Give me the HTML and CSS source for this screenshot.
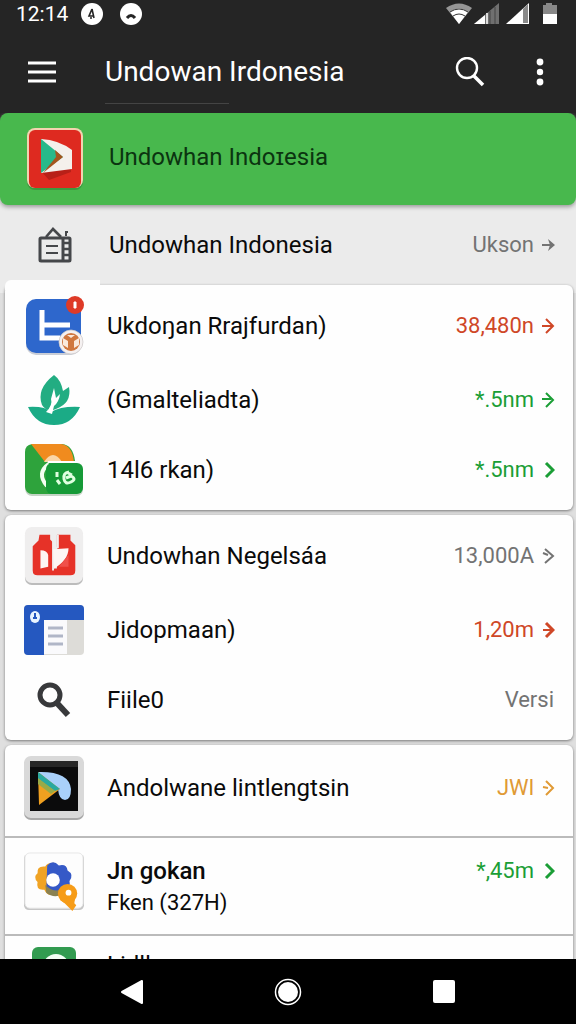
FILE: index.html
```html
<!DOCTYPE html>
<html lang="id">
<head>
<meta charset="utf-8">
<meta name="viewport" content="width=device-width, initial-scale=1">
<title>Undowan Irdonesia</title>
<link rel="stylesheet" href="styles.css">
</head>
<body>
<div class="screen">
  <header class="top">
    <div class="status">
      <span class="clock">12:14</span>
      <svg class="status-dot" viewBox="0 0 22 22" aria-hidden="true"><circle cx="11" cy="11" r="11" fill="#fff"/><path d="M11 6l-3 7h5M11 6l2 9M9 15h2" fill="none" stroke="#252525" stroke-width="1.600"/></svg>
      <svg class="status-dot" viewBox="0 0 22 22" aria-hidden="true"><circle cx="11" cy="11" r="11" fill="#fff"/><path d="M7 15q4-5 8 0" fill="none" stroke="#252525" stroke-width="3"/></svg>
      <svg class="signals" viewBox="0 0 112 22" aria-hidden="true">
        <path d="M0 5Q13-4 26 5L13 21Z" fill="#969696"/><path d="M4 9q9-7 18 0l-9 12Z" fill="#fff"/><path d="M4 9q9-6 18 0M7 13q6-4 12 0" fill="none" stroke="#333" stroke-width="1"/>
        <path d="M28 21L53 0V21Z" fill="#707070"/><path d="M28 21L39 12V21Z" fill="#fff"/><path d="M41 10v11" stroke="#ddd" stroke-width="2"/><path d="M44 8v13M49 4v17" stroke="#444"/>
        <path d="M60 21L83 0V21Z" fill="#fff"/><path d="M77 6L82 1V20H77Z" fill="#8a8a8a"/>
        <path d="M97 2h3V0h6v2h5v19H97Z" fill="#888"/><path d="M97 11h14v10H97Z" fill="#fff"/>
      </svg>
    </div>
    <div class="toolbar">
      <button class="tool" type="button" aria-label="Menu"><svg width="28" height="22" viewBox="0 0 28 22"><path d="M0 2h28M0 11h28M0 20h28" stroke="#fff" stroke-width="3"/></svg></button>
      <h1 class="title">Undowan Irdonesia</h1>
      <button class="tool" type="button" aria-label="Cari"><svg width="30" height="30" viewBox="0 0 30 30" fill="none" stroke="#fff"><circle cx="12" cy="11" r="10" stroke-width="2.4"/><path d="M19 19l9 9" stroke-width="3.6"/></svg></button>
      <button class="tool" type="button" aria-label="Opsi lain"><svg width="8" height="28" viewBox="0 0 8 28" fill="#fff"><circle cx="4" cy="4" r="3.4"/><circle cx="4" cy="14" r="3.2"/><circle cx="4" cy="24" r="3.4"/></svg></button>
    </div>
  </header>

  <main class="content">
    <a class="row banner" href="#">
      <span class="icon"><svg width="58" height="62" viewBox="0 0 58 62">
        <rect x="1" y="2" width="56" height="60" rx="8" fill="#2f7d32" opacity=".5"/><rect x="1" y="0" width="56" height="60" rx="8" fill="#f3d3b0"/><rect x="3" y="2" width="52" height="58" rx="6" fill="#de2a20"/>
        <path d="M15 43l8 9 22-8v-3Z" fill="#b82018"/><path d="M15 11q18 1 31 11v19l-31 4Z" fill="#f4f0ec"/><path d="M15 11L37 29 15 45Z" fill="#27b98a"/><path d="M29 22l8 7-20 16 13-16Z" fill="#a4551e"/></svg></span>
      <span class="label">Undowhan Indoɪesia</span>
    </a>
    <a class="row intro" href="#">
      <span class="icon"><svg width="34" height="36" viewBox="0 0 34 36" fill="none" stroke="#45474a">
        <rect x="2" y="11" width="30" height="23" rx="1" stroke-width="3"/><path d="M8 10l7-8 8 8" stroke-width="2.6"/><path d="M25 11v23" stroke-width="3"/><path d="M26 16h6M26 22h6M26 28h6" stroke-width="2.6"/><path d="M8 19h12M8 26h12" stroke-width="2"/><path d="M28 9V5M27 5h3" stroke-width="2"/></svg></span>
      <span class="label">Undowhan Indonesia</span>
      <span class="value gray">Ukson</span>
      <svg class="arrow gray" viewBox="0 0 13 18"><path d="M0 9h8"/><path d="M6 3l7 6-7 6 2-6Z" fill="currentColor" stroke="none"/></svg>
    </a>

    <section class="card tabbed">
      <a class="row tall" href="#">
        <span class="icon"><svg width="60" height="60" viewBox="0 0 60 60">
          <rect x="2" y="5" width="55" height="54" rx="10" fill="#c9cdd6"/><rect x="2" y="3" width="55" height="54" rx="10" fill="#2e67cc"/>
          <path d="M18 14v28h18M18 29h28" fill="none" stroke="#fff" stroke-width="5"/>
          <circle cx="51" cy="9" r="9" fill="#de3a27"/><path d="M50 6h2v6h-2Z" fill="#fff" stroke="#fff"/>
          <circle cx="47" cy="46" r="12" fill="#f5f1f1" stroke="#cfcaca" stroke-width=".8"/><circle cx="47" cy="46" r="9" fill="#d0773f"/><path d="M39 42l5 3v7l-5-3ZM55 42l-5 3v7l5-3ZM43 39l4 3 4-3" fill="#fae9dc"/></svg></span>
        <span class="label">Ukdoŋan Rrajfurdan)</span>
        <span class="value red">38,480n</span>
        <svg class="arrow red" viewBox="0 0 13 18"><path d="M0 9h11M4 2l7 7-7 7"/></svg>
      </a>
      <a class="row short" href="#">
        <span class="icon"><svg width="54" height="52" viewBox="0 0 54 52">
          <path d="M27 1Q9 15 15 31q5 8 14 4Q45 29 42 13l-6 4Q34 6 27 1Z" fill="#22ad82"/><path d="M1 33q17-1 23 5 10-6 29-5Q45 51 27 51T1 33Z" fill="#1bab86"/>
          <path d="M19 38q7-7 5-13l3-11 2 10 4-4q-1 8-6 12l-2 8Z" fill="#fff"/></svg></span>
        <span class="label">(Gmalteliadta)</span>
        <span class="value green">*.5nm</span>
        <svg class="arrow green" viewBox="0 0 13 18"><path d="M0 8h9M4 2l7 7-7 7"/></svg>
      </a>
      <a class="row mid" href="#">
        <span class="icon"><svg width="60" height="52" viewBox="0 0 60 52">
          <path d="M1 40h58v5q0 7-7 7H8q-6 0-7-7Z" fill="#c4d3c5"/><path d="M8 0h30q11 1 13 17v33H8q-6 0-7-7V8q0-7 7-8Z" fill="#2ea33c"/><path d="M7 0h30q11 1 13 18H21Z" fill="#f08b1e"/><path d="M20 18q9-14 18 0Z" fill="#fad6a8"/>
          <path d="M25 20q-13 9-2 22" fill="none" stroke="#f4fff2" stroke-width="4"/><path d="M24 18h32" stroke="#fff" stroke-width="2"/><rect x="22" y="19" width="37" height="31" rx="6" fill="#169a37"/>
          <path d="M33 28v5M33 36l3 4M45 28q-6 1-5 7t7 3 0-6l-5 2M44 29l4 2" fill="none" stroke="#dfffe0" stroke-width="3"/></svg></span>
        <span class="label">14l6 rkan)</span>
        <span class="value green">*.5nm</span>
        <svg class="arrow green bold" viewBox="0 0 13 18"><path d="M4 2l7 7-7 7"/></svg>
      </a>
    </section>

    <section class="card">
      <a class="row tall" href="#">
        <span class="icon"><svg width="60" height="62" viewBox="0 0 62 62">
          <rect x="1" y="3" width="60" height="58" rx="7" fill="#bcbcbc"/><rect x="1" y="1" width="60" height="58" rx="7" fill="#efeeee"/>
          <path d="M16 9h11v5l3 3v27h4V24V9h14v6l5 5v26q0 5-5 5H14q-5 0-5-5V21l6-6Z" fill="#e63228"/><path d="M30 8v38M30 24l5-2V9" stroke="#efeeee" stroke-width="2" fill="none"/><path d="M17 25q7 0 8 5v12l-8 2ZM30 24l16-1q0 12-15 21Z" fill="#fdf6f4"/><path d="M36 42l10-12v12Z" fill="#f0504a"/></svg></span>
        <span class="label">Undowhan Negelsáa</span>
        <span class="value gray">13,000A</span>
        <svg class="arrow gray" viewBox="0 0 13 18"><path d="M3 2l8 7-8 7M1 6l5 2"/></svg>
      </a>
      <a class="row short" href="#">
        <span class="icon"><svg width="60" height="50" viewBox="0 0 60 50">
          <rect width="60" height="50" rx="4" fill="#dddcd8"/><path d="M4 0h52q4 0 4 4v11H20v35H4q-4 0-4-4V4q0-4 4-4Z" fill="#2558c0"/><path d="M20 15h23v34H20Z" fill="#fafafc"/><path d="M24 23h15M24 31h15M24 39h15" stroke="#b0b6c7" stroke-width="3"/><ellipse cx="11" cy="12" rx="5" ry="6" fill="#e9f4ff"/><path d="M11 8v5M9 13h4" stroke="#2558c0" stroke-width="2"/></svg></span>
        <span class="label">Jidopmaan)</span>
        <span class="value red">1,20m</span>
        <svg class="arrow red bold" viewBox="0 0 13 18"><path d="M4 2l7 7-7 7"/><path d="M1 9h9" stroke-width="2"/></svg>
      </a>
      <a class="row mid" href="#">
        <span class="icon"><svg width="34" height="36" viewBox="0 0 34 36" fill="none" stroke="#38393b"><circle cx="13" cy="13" r="10" stroke-width="5"/><path d="M19 20l12 13" stroke-width="6"/></svg></span>
        <span class="label">Fiile0</span>
        <span class="value gray last">Versi</span>
      </a>
    </section>

    <section class="card divided">
      <a class="row tall" href="#">
        <span class="icon"><svg width="60" height="64" viewBox="0 0 60 64">
          <rect y="2" width="60" height="62" rx="7" fill="#a8a8a8"/><rect width="60" height="62" rx="7" fill="#d9d9d9"/><path d="M6 5h48v50H6Z" fill="#0b0b0c"/><path d="M6 5h48v6H6Z" fill="#272727"/>
          <path d="M14 16q31-1 33 17 0 11-6 11-6 0-7-11Z" fill="#a9d0fa"/><path d="M14 16l22 17-21 16Z" fill="#f0a020"/><path d="M14 16l22 17-5 2-17-12Z" fill="#28a9a0"/><path d="M14 22l17 13-4 3-13-10Z" fill="#98aa48"/></svg></span>
        <span class="label">Andolwane lintlengtsin</span>
        <span class="value orange">JWl</span>
        <svg class="arrow orange" viewBox="0 0 13 18"><path d="M4 2l7 7-7 7M1 8l5 1"/></svg>
      </a>
      <a class="row double" href="#">
        <span class="icon"><svg class="tile" width="60" height="62" viewBox="0 0 62 62">
          <rect x="0" y="2" width="62" height="58" rx="5" fill="#c6c6c6"/><rect x="1" y="1" width="60" height="57" rx="5" fill="#fdfdfd" stroke="#e6e6e6"/>
          <path d="M31 11q-8 0-9 4-9-1-8 7-5 4 0 9-2 9 7 8 3 7 10 5Z" fill="#f0a324"/><path d="M24 14q6-7 12 0 8-2 9 5 7 4 2 11 2 8-6 9-4 7-13 5-5-2-5-6Z" fill="#3559c7"/><path d="M22 34q8 8 16 5l2 5q-10 4-17-2Z" fill="#8b8252"/><circle cx="30" cy="29" r="7" fill="#fff"/>
          <circle cx="45" cy="43" r="10" fill="#f69c18"/><path d="M37 49l16-3-1 7 2 2-4 6-8-8Z" fill="#f69c18"/><circle cx="46" cy="42" r="3" fill="#fff"/></svg></span>
        <span class="label"><strong class="name">Jn gokan</strong><span class="sub">Fken (327H)</span></span>
        <span class="value green">*,45m</span>
        <svg class="arrow green bold" viewBox="0 0 13 18"><path d="M4 2l7 7-7 7"/></svg>
      </a>
      <a class="row clipped" href="#">
        <span class="icon"><svg width="44" height="44" viewBox="0 0 44 44"><rect width="44" height="44" rx="6" fill="#329b50"/><circle cx="24" cy="20" r="13" fill="#f3fff5"/></svg></span>
        <span class="label">Lidlk</span>
      </a>
    </section>
  </main>

  <nav class="navbar">
    <button class="nav" type="button" aria-label="Kembali"><svg width="24" height="26" viewBox="0 0 24 26"><path d="M2 13L22 2v22Z" fill="#fff" stroke="#fff" stroke-width="2" stroke-linejoin="round"/></svg></button>
    <button class="nav" type="button" aria-label="Beranda"><svg width="28" height="28" viewBox="0 0 28 28"><circle cx="14" cy="14" r="12.500" fill="none" stroke="#fff" stroke-width="1.500"/><circle cx="14" cy="14" r="10" fill="#fff"/></svg></button>
    <button class="nav" type="button" aria-label="Terbaru"><svg width="22" height="23" viewBox="0 0 22 23"><rect width="22" height="23" rx="2" fill="#fff"/></svg></button>
  </nav>
</div>
</body>
</html>
```
FILE: styles.css
```css
* { box-sizing: border-box; }
body { margin: 0; font-family: Roboto, "Liberation Sans", sans-serif; background: #252525; }
button { border: 0; background: none; padding: 0; display: grid; place-items: center; }
svg { display: block; }
a { color: inherit; text-decoration: none; }

.screen { height: 100vh; display: flex; flex-direction: column; }

.top { background: #252525; color: #fff; padding-bottom: 12px; }
.status { height: 28px; display: flex; align-items: center; padding: 0 18px 0 16px; }
.clock { font-size: 21px; line-height: 28px; width: 65px; }
.status-dot { width: 22px; height: 22px; margin-right: 17px; }
.signals { width: 112px; height: 22px; margin-left: auto; }
.toolbar { height: 73px; display: flex; align-items: center; padding: 14px 12px 0 18px; }
.tool { width: 48px; height: 48px; }
.tool + .tool { margin-left: 22px; }
.title { position: relative; flex: 1; margin: 0 0 0 39px; font-size: 28px; line-height: 40px; font-weight: 400; white-space: nowrap; }
.title::after { content: ""; position: absolute; left: 0; bottom: -12px; width: 124px; height: 1px; background: #444; }

.content { flex: 1; min-height: 0; overflow: hidden; background: #dfdfdf; }
.row { display: flex; align-items: center; padding: 0 18px 0 19px; }
.icon { width: 60px; flex: none; display: grid; place-items: center; }
.label { flex: 1; margin-left: 23px; font-size: 24px; line-height: 32px; color: #0a0a0a; white-space: nowrap; }
.value { font-size: 22px; line-height: 32px; }
.value.last { margin-right: 1px; }
.arrow { width: 13px; height: 18px; margin-left: 8px; fill: none; stroke: currentColor; stroke-width: 2; }
.arrow.bold { stroke-width: 3; }

.gray { color: #737373; }
.red { color: #cf4727; }
.green { color: #1b9e36; }
.orange { color: #e09a35; }

.banner { position: relative; height: 92px; padding-left: 25px; background: #48b84d; border-radius: 8px; box-shadow: 0 2px 4px #9a9a9a, 0 -8px 0 8px #252525; clip-path: inset(-10px 0 -8px); }
.banner .label { color: #0b3410; padding-bottom: 4px; }
.intro { height: 80px; padding: 0 21px 0 25px; background: #ebebeb; }
.banner .label, .intro .label { margin-left: 24px; }
.banner { clip-path: none; box-shadow: 0 2px 4px #9a9a9a; }
.content { background: linear-gradient(#252525 20px, #ebebeb 20px 180px, #dfdfdf 180px); }

.card { position: relative; margin: 0 3px 5px 5px; background: #fefefe; border-radius: 6px; box-shadow: 0 1px 3px #777; }
.tabbed::before { content: ""; position: absolute; left: 0; top: -5px; width: 95px; height: 10px; background: #fefefe; border-radius: 6px 0 0 0; }
.tall { height: 81px; }
.short { height: 68px; }
.mid { height: 76px; padding-bottom: 4px; }
.divided .row + .row { border-top: 2px solid #bbb; }
.divided .tall { height: 91px; padding-bottom: 6px; }
.double { height: 98px; align-items: flex-start; padding-top: 13px; }
.double .value, .double .name { line-height: 40px; }
.double .arrow { margin-top: 11px; }
.name, .sub { display: block; }
.name { font-weight: 500; }
.sub { font-size: 22px; line-height: 24px; }
.clipped { height: 70px; align-items: flex-start; padding-top: 11px; }
.clipped .label { padding-top: 2px; }

.navbar { height: 65px; flex: none; display: flex; justify-content: center; align-items: center; background: #000; }
.nav { width: 27%; height: 64px; }
```
